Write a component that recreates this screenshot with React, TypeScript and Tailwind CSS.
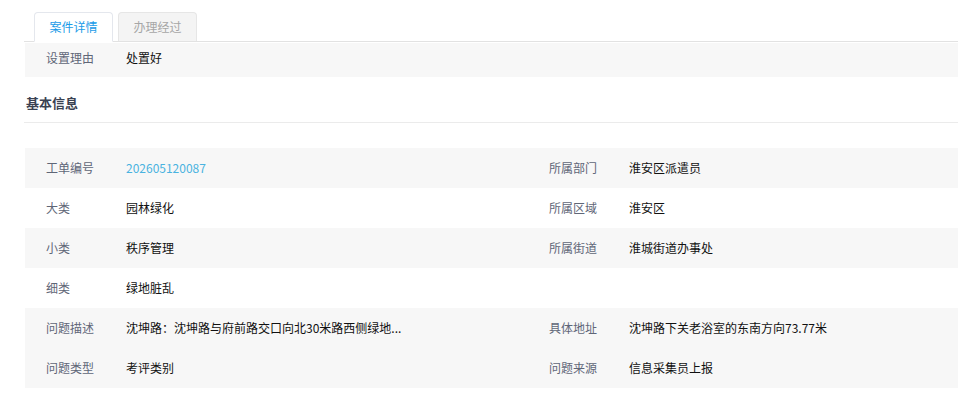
import React from 'react';

type Cell = { label: string; value: string; link?: boolean };
type Row = { left: Cell; right?: Cell; gray: boolean };

const rows: Row[] = [
  { left: { label: '工单编号', value: '202605120087', link: true }, right: { label: '所属部门', value: '淮安区派遣员' }, gray: true },
  { left: { label: '大类', value: '园林绿化' }, right: { label: '所属区域', value: '淮安区' }, gray: false },
  { left: { label: '小类', value: '秩序管理' }, right: { label: '所属街道', value: '淮城街道办事处' }, gray: true },
  { left: { label: '细类', value: '绿地脏乱' }, gray: false },
  { left: { label: '问题描述', value: '沈坤路：沈坤路与府前路交口向北30米路西侧绿地...' }, right: { label: '具体地址', value: '沈坤路下关老浴室的东南方向73.77米' }, gray: true },
  { left: { label: '问题类型', value: '考评类别' }, right: { label: '问题来源', value: '信息采集员上报' }, gray: true },
];

function Field({ cell }: { cell: Cell }) {
  return (
    <div className="flex items-center">
      <span className="w-[80px] text-[#5f6677]">{cell.label}</span>
      <span className={cell.link ? 'text-[#4ab3e0]' : 'text-[#111]'}>{cell.value}</span>
    </div>
  );
}

export default function App() {
  return (
    <div
      className="w-[958px] h-[400px] bg-white text-[12px] leading-[16px] overflow-hidden"
      style={{ fontFamily: '"Microsoft YaHei", "Noto Sans CJK SC", sans-serif' }}
    >
      <div className="pt-[12px] pl-[24px]">
        <div className="flex gap-[5px] pl-[10px] border-b border-[#e2e2e2]">
          <div className="w-[79px] h-[30px] -mb-px flex items-center justify-center bg-white border border-[#e4e7ed] border-b-white rounded-t-[4px] text-[#1a9be8]">
            案件详情
          </div>
          <div className="w-[79px] h-[29px] flex items-center justify-center bg-[#f4f4f4] border border-[#e6e6e6] border-b-0 rounded-t-[4px] text-[#a6a6a6]">
            办理经过
          </div>
        </div>
        <div className="mt-[1px] ml-px h-[34px] bg-[#f7f7f7] flex items-center pl-[21px] pb-[4px]">
          <Field cell={{ label: '设置理由', value: '处置好' }} />
        </div>
        <div className="h-[46px] flex items-center pt-[6px] pl-[2px] border-b border-[#ebebeb] font-bold text-[#3a4252] text-[13px]">
          基本信息
        </div>
        <div className="mt-[25px] ml-px">
          {rows.map((r, i) => (
            <div key={i} className={`h-[40px] flex items-center ${r.gray ? 'bg-[#f7f7f7]' : 'bg-white'}`}>
              <div className="w-[503px] pl-[21px]">
                <Field cell={r.left} />
              </div>
              {r.right && (
                <div className="pl-[21px]">
                  <Field cell={r.right} />
                </div>
              )}
            </div>
          ))}
        </div>
      </div>
    </div>
  );
}
